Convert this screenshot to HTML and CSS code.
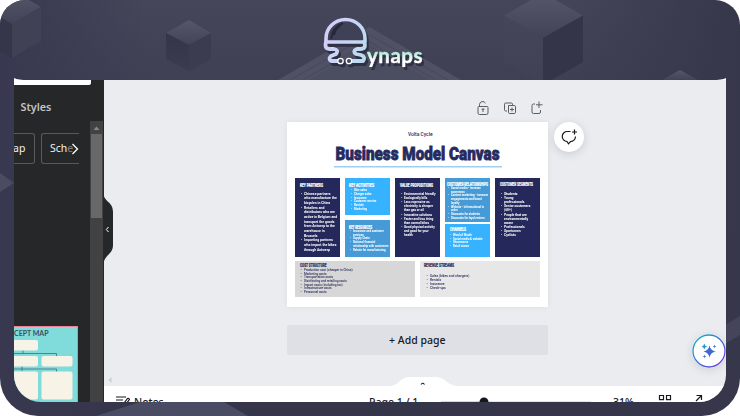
FILE: index.html
```html
<!DOCTYPE html>
<html lang="en">
<head>
<meta charset="utf-8">
<title>Synaps</title>
<link rel="stylesheet" href="styles.css">
</head>
<body>
<div class="frame">
  <svg class="backdrop" viewBox="0 0 740 416" aria-hidden="true">
    <defs>
      <linearGradient id="top" x1="0" y1="0" x2="0" y2="1"><stop offset="0" stop-color="#565769"/><stop offset="1" stop-color="#424357"/></linearGradient>
      <linearGradient id="side" x1="0" y1="0" x2="0" y2="1"><stop offset="0" stop-color="#343549"/><stop offset="1" stop-color="#3b3c50"/></linearGradient>
      <linearGradient id="lit" x1="0" y1="0" x2="0" y2="1"><stop offset="0" stop-color="#454659"/><stop offset="1" stop-color="#404155"/></linearGradient>
    </defs>
    <path fill="url(#top)" d="M12-10 41 7 12 24-17 7z"/><path fill="#35364a" d="M-17 7 12 24V58L-17 41z"/><path fill="#404154" d="M41 7 12 24V58L41 41z"/>
    <path fill="url(#top)" d="M189 20 211 33 189 45 166 33z"/><path fill="url(#side)" d="M166 33 189 45V71L166 59z"/><path fill="#3b3c50" d="M211 33 189 45V71L211 59z"/>
    <path fill="url(#top)" d="M543-7 583 15.500 543 38 504 15.500z"/><path fill="url(#lit)" d="M504 15.500 543 38V85L504 62z"/><path fill="#343549" d="M583 15.500 543 38V85L583 62z"/>
    <path fill="url(#top)" d="M680 70 698 80H662z"/>
    <path fill="#505164" d="M369.500 27 461 80H278z"/>
    <path fill="#4b4d60" d="M369.500 45 430 80H309z"/>
    <path fill="none" stroke="#494a5e" stroke-width="1.200" d="M290 80 369.500 35 448 80M303 80 369.500 42 436 80"/>
    <path fill="#4b4c61" d="M0 173 14 183 0 192z"/>
    <path fill="#50526a" d="M140 402H224L248 416H96z" opacity=".8"/>
    <path fill="#44455a" d="M725 325 740 316V335L725 344z"/>
  </svg>

  <header class="brand">
    <svg class="logo" viewBox="0 0 110 60" role="img" aria-label="Synaps">
      <defs>
        <linearGradient id="ink" gradientUnits="userSpaceOnUse" x1="4" y1="10" x2="101" y2="50"><stop offset="0" stop-color="#d5cdf9"/><stop offset=".4" stop-color="#c0d9f2"/><stop offset="1" stop-color="#8fe5bd"/></linearGradient>
        <linearGradient id="word" gradientUnits="userSpaceOnUse" x1="0" y1="35" x2="0" y2="52"><stop offset="0" stop-color="#a0e6d0"/><stop offset=".65" stop-color="#ffffff"/></linearGradient>
      </defs>
      <path class="dome" d="M5 27V23.500a19.500 19 0 0 1 39 0V27z"/>
      <path class="shine" d="M10 24Q11 13 22 8M13 20Q14 14 19 11"/>
      <path class="legs" d="M5 27Q3 34 9 34H13Q18 35 15 39L10 41Q7 44 10 46H17M43 27Q46 34 39 34H36Q31 36 35 39L40 40Q45 42 42 46H31"/>
      <circle class="node" cx="19.500" cy="46" r="2.700"/><circle class="node" cx="28" cy="46" r="2.700"/>
      <text class="wordmark" x="46" y="47.500" textLength="55.500" lengthAdjust="spacing">ynaps</text>
    </svg>
  </header>

  <div class="app">
    <aside class="sidebar">
      <div class="side-main">
        <div class="searchbox"></div>
        <div class="styles-tab">Styles</div>
        <div class="chips">
          <span class="chip chip-cut">ap</span>
          <span class="chip chip-fade">Sch<i>e</i></span>
          <svg class="chip-arrow" viewBox="0 0 8 12"><path d="M1.500 1 6.500 6 1.500 11"/></svg>
        </div>
        <div class="concept">
          <div class="concept-title">CEPT MAP</div>
          <svg viewBox="0 0 61 66" class="concept-map">
            <path class="wire" d="M0 13.500H42.500V16M9 10V13.500M0 29H42.500V32M8 26V31"/>
            <g class="box"><rect x="-6" y="0" width="30" height="10.500" rx="2"/><rect x="-6" y="16" width="30" height="10.500" rx="2"/><rect x="27.500" y="16" width="31" height="10.500" rx="2"/><rect x="-6" y="31.500" width="30" height="28" rx="2"/><rect x="27.500" y="31.500" width="31" height="28" rx="2"/></g>
          </svg>
        </div>
      </div>
      <div class="scroll">
        <svg class="scroll-up" viewBox="0 0 13 13"><path d="M3.500 9 6.500 5.500 9.500 9z"/></svg>
        <div class="thumb"></div>
      </div>
    </aside>

    <main class="work">
      <div class="tools">
        <svg viewBox="0 0 14 16"><path d="M3 6.500H11Q12 6.500 12 7.500V13Q12 14.500 10.500 14.500H3.500Q2 14.500 2 13V7.500Q2 6.500 3 6.500zM3.500 6.500V4.500A3.200 3.200 0 0 1 9.500 3.200M7 8.500V12M5.500 9.200H8.500"/></svg>
        <svg viewBox="0 0 14 16"><path d="M4 11H2.700Q1.500 11 1.500 9.800V4.200Q1.500 3 2.700 3H8.300Q9.500 3 9.500 4.200V5M5.500 5.500H11.300Q12.500 5.500 12.500 6.700V12.300Q12.500 13.500 11.300 13.500H6.700Q5.500 13.500 5.500 12.300zM9 7.500V11.500M7 9.500H11"/></svg>
        <svg viewBox="0 0 14 16"><path d="M5 4H3.500Q2 4 2 5.500V12Q2 13.500 3.500 13.500H9Q10.500 13.500 10.500 12V10M9 1.500V8M6 4.800H12.500"/></svg>
      </div>

      <section class="sheet">
        <svg class="sheet-head" viewBox="0 0 260 56">
          <text class="company" x="121" y="13.500" textLength="24.500" lengthAdjust="spacingAndGlyphs">Volta Cycle</text>
          <text class="title" x="48.500" y="38" textLength="164" lengthAdjust="spacingAndGlyphs">Business Model Canvas</text>
          <rect x="47" y="44" width="168" height="1.500" fill="#9fcfee"/>
        </svg>
        <div class="board">
          <div class="col"><div class="card navy">
            <svg class="cap"><text x="0" y="5.500" textLength="23" lengthAdjust="spacingAndGlyphs">KEY PARTNERS</text></svg>
            <ul class="partners"><li>Chinese partners<br>who manufacture the<br>bicycles in China</li><li>Retailers and<br>distributors who are<br>active in Belgium and<br>transport the goods<br>from Antwerp to the<br>warehouse in<br>Brussels</li><li>Importing partners<br>who import the bikes<br>through Antwerp</li></ul>
          </div></div>
          <div class="col">
            <div class="card sky activities-card">
              <svg class="cap"><text x="-1" y="5.500" textLength="25" lengthAdjust="spacingAndGlyphs">KEY ACTIVITIES</text></svg>
              <ul class="small activities"><li>Bike sales</li><li>Charger sales</li><li>Insurance</li><li>Customer service</li><li>Rentals</li><li>Marketing</li></ul>
            </div>
            <div class="card blue resources-card">
              <svg class="cap"><text x="-1" y="6" textLength="23" lengthAdjust="spacingAndGlyphs">KEY RESOURCES</text></svg>
              <ul class="small resources"><li>Insurance and customer<br>services</li><li>Supply Chain</li><li>National financial<br>relationship with customers</li><li>Rebate for manufacturing</li></ul>
            </div>
          </div>
          <div class="col"><div class="card navy">
            <svg class="cap"><text x="0" y="5.500" textLength="33" lengthAdjust="spacingAndGlyphs">VALUE PROPOSITIONS</text></svg>
            <ul class="medium"><li>Environmental friendly</li><li>Ecologically bills</li><li>Less expensive as<br>electricity is cheaper<br>than gas or oil</li><li>Innovative solutions</li><li>Faster and less tiring<br>than normal bikes</li><li>Good physical activity<br>and good for your<br>health</li></ul>
          </div></div>
          <div class="col close">
            <div class="card blue relations-card">
              <svg class="cap"><text x="-2" y="4.500" textLength="41" lengthAdjust="spacingAndGlyphs">CUSTOMER RELATIONSHIPS</text></svg>
              <ul class="small relations"><li>Social media - increase<br>awareness</li><li>Content marketing - increase<br>engagements and brand<br>loyalty</li><li>Website - informational in<br>order</li><li>Discounts for students</li><li>Discounts for loyal renters</li></ul>
            </div>
            <div class="card sky channels-card">
              <svg class="cap"><text x="0" y="5" textLength="16" lengthAdjust="spacingAndGlyphs">CHANNELS</text></svg>
              <ul class="small channels"><li>Word of Mouth</li><li>Social media &amp; website</li><li>Showrooms</li><li>Retail stores</li></ul>
            </div>
          </div>
          <div class="col"><div class="card navy">
            <svg class="cap"><text x="0" y="5" textLength="33" lengthAdjust="spacingAndGlyphs">CUSTOMER SEGMENTS</text></svg>
            <ul class="medium segments"><li>Students</li><li>Young<br>professionals</li><li>Senior customers<br>(60+)</li><li>People that are<br>environmentally<br>aware</li><li>Professionals</li><li>Sportsmen</li><li>Cyclists</li></ul>
          </div></div>
        </div>
        <div class="finance">
          <div class="card grey">
            <svg class="cap"><text x="0" y="5.500" textLength="26.500" lengthAdjust="spacingAndGlyphs">COST STRUCTURE</text></svg>
            <ul class="small costs"><li>Production cost (cheaper in China)</li><li>Marketing costs</li><li>Transportation costs</li><li>Distributing and retailing costs</li><li>Import costs (including tax)</li><li>Infrastructure costs</li><li>Personnel costs</li></ul>
          </div>
          <div class="card pale">
            <svg class="cap"><text x="-1" y="6" textLength="30" lengthAdjust="spacingAndGlyphs">REVENUE STREAMS</text></svg>
            <ul class="small revenue"><li>Sales (bikes and chargers)</li><li>Rentals</li><li>Insurance</li><li>Check-ups</li></ul>
          </div>
        </div>
      </section>

      <button class="add-page">+ Add page</button>

      <div class="lower">
        <svg class="scroll-left" viewBox="0 0 4 6"><path d="M3.500 0V6L.5 3z"/></svg>
        <svg class="bump" viewBox="0 0 70 10"><path fill="#fff" d="M0 10C11 10 10 1 21 1H46C58 1 57 10 70 10z"/><path class="caret" d="M32 8.500Q33.500 6 35.500 8.500"/></svg>
      </div>
      <footer class="status">
        <svg class="notes-icon" viewBox="0 0 16 12"><path d="M1 2H11M1 5H8M1 8H6M8 9.500 12.500 3.500Q14 3 14.500 4.500L10.500 9.500z"/></svg>
        <span class="notes">Notes</span>
        <span class="page-no">Page 1 / 1</span>
        <svg class="slider" viewBox="0 0 152 12"><path class="done" d="M1 7H43"/><path class="rest" d="M43 7H151"/><circle cx="44" cy="7" r="4.500"/></svg>
        <span class="zoom">31%</span>
        <svg class="grid" viewBox="0 0 14 14"><path d="M1.500 1.500H5.500V5.700H1.500zM8.500 1.500H12.500V5.700H8.500zM1.500 8.500H5.500V12H1.500zM8.500 8.500H12.500V12H8.500z"/></svg>
        <svg class="expand" viewBox="0 0 8 10"><path d="M1.500 1.500H6.500V6M6 2 1 7"/></svg>
      </footer>
    </main>

    <svg class="collapse" viewBox="0 0 11 74"><path fill="#252728" d="M0 0C1 11 10 9 10 20V53C10 63 1 62 0 74z"/><path class="tick" d="M5.500 35 3.300 37.500 5.500 40"/></svg>
    <button class="bubble comment" aria-label="Comment"><svg viewBox="0 0 18 18"><path d="M10.500 3.500H7.500A5 5 0 0 0 7 13.500L8.500 15.800 10.500 13.500A5.200 5.200 0 0 0 15.500 8.500M14.500 1.500V6.500M12 4H17"/></svg></button>
    <button class="bubble magic" aria-label="Magic"><svg viewBox="0 0 34 34"><defs><linearGradient id="m" x1="0" y1="0" x2="1" y2="1"><stop offset="0" stop-color="#16b5c4"/><stop offset=".5" stop-color="#3671d5"/><stop offset="1" stop-color="#7435df"/></linearGradient></defs><circle cx="17" cy="17" r="16" fill="#fff" stroke="url(#m)" stroke-width="1.300"/><path fill="#4068d3" d="M17.500 11.500Q18.500 16.500 23.500 17.500 18.500 18.500 17.500 23.500 16.500 18.500 11.500 17.500 16.500 16.500 17.500 11.500z"/><path fill="#2596c9" d="M12.300 9.500Q12.700 12.100 15.300 12.500 12.700 12.900 12.300 15.500 11.900 12.900 9.300 12.500 11.900 12.100 12.300 9.500z"/><path fill="#3f76d6" d="M22.500 10.500 23 12 24.500 12.500 23 13 22.500 14.500 22 13 20.500 12.500 22 12zM12.500 20.500 13 22 14.500 22.500 13 23 12.500 24.500 12 23 10.500 22.500 12 22z"/></svg></button>
  </div>
  <svg class="corner corner-left" viewBox="0 0 14 2"><path d="M0 0Q4 2 14 2H0z"/></svg>
  <svg class="corner corner-right" viewBox="0 0 14 2"><path d="M14 0Q10 2 0 2H14z"/></svg>
</div>
</body>
</html>
```
FILE: styles.css
```css
* { box-sizing: border-box; }
body { margin: 0; background: #fff; font-family: "Noto Sans", "Open Sans", sans-serif; }
button { border: 0; padding: 0; font: inherit; }
svg { display: block; flex: none; }
ul { list-style: none; margin: 0; padding: 0; }

.frame {
  position: relative;
  width: 740px;
  height: 416px;
  overflow: hidden;
  border-radius: 25px 25px 38px 38px;
  background: linear-gradient(90deg, #383950 0, transparent 20%, transparent 75%, #36374b 100%), linear-gradient(#454659 0, #3d3e52 25%, #343549 100%);
}
.backdrop { position: absolute; inset: 0; width: 740px; height: 416px; }
.brand { position: relative; height: 80px; padding: 15px 0 0 320.5px; }
.logo { width: 110px; height: 60px; overflow: visible; filter: drop-shadow(2.5px 3px 0 #2f3044); }
.dome { fill: #3f4156; stroke: url(#ink); stroke-width: 3.6; stroke-linejoin: round; }
.shine { fill: none; stroke: #262839; stroke-width: 2; }
.legs { fill: none; stroke: url(#ink); stroke-width: 3.8; stroke-linecap: round; stroke-linejoin: round; }
.node { fill: #44465b; stroke: #fff; stroke-width: 1.3; }
.wordmark { font: 700 20.5px "Lato", sans-serif; fill: url(#word); stroke: url(#word); stroke-width: .4; }

.app {
  position: relative;
  display: flex;
  width: 711.5px;
  height: 322px;
  margin-left: 14px;
  overflow: hidden;
  border-radius: 0 0 27px 27px;
  background: #ebecf0;
}
.sidebar { display: flex; width: 89.5px; flex: none; background: #252728; color: #fff; }
.side-main { width: 76px; display: flex; flex-direction: column; flex: none; }
.searchbox { width: 77px; height: 5px; background: #fff; border-radius: 0 0 2px 0; }
.styles-tab { margin: 13.5px 0 0 6.5px; font-size: 10.8px; line-height: 15px; font-weight: 600; color: #c2c3c4; }
.chips { display: flex; align-items: center; margin-top: 19.5px; height: 31px; }
.chip { display: block; height: 31px; line-height: 28px; font-size: 10.5px; border: 1px solid #58595b; color: #f2f2f2; }
.chip-cut { width: 21px; border-left: 0; border-radius: 0 3px 3px 0; text-indent: -1px; }
.chip-fade { width: 38px; margin-left: 6px; padding-left: 8px; border-right: 0; border-radius: 3px 0 0 3px; }
.chip-fade i { font-style: normal; color: #818284; }
.chip-arrow { width: 8px; height: 12px; margin-left: -8px; margin-right: auto; }
.chip-arrow path { fill: none; stroke: #fff; stroke-width: 1.3; }
.concept { width: 64px; height: 76px; margin-top: auto; overflow: hidden; background: #80dbdb; border: solid #ee809a; border-width: 1.5px 1.5px 0 0; }
.concept-title { height: 13px; font: 700 7px/12px Lato, sans-serif; color: #434c5a; white-space: nowrap; }
.concept-map { width: 61px; height: 66px; }
.wire { fill: none; stroke: #456e72; stroke-width: .8; }
.box { fill: #f8f3e7; }
.scroll { width: 13px; height: 281px; margin-top: 41px; background: #424242; }
.scroll-up { width: 13px; height: 13px; }
.scroll-up path { fill: #888; }
.thumb { width: 11px; height: 84px; margin: 0 auto; background: #686868; }

.work { flex: 1; display: flex; flex-direction: column; }
.tools { display: flex; gap: 13px; margin: 20px 0 0 372px; height: 22px; }
.tools svg { width: 14px; height: 16px; }
.tools path { fill: none; stroke: #5a5d65; stroke-width: 1; }
.sheet { width: 260.5px; height: 185px; margin-left: 183.5px; background: #fff; box-shadow: 0 0 6px #00000010; }
.sheet-head { width: 260px; height: 56px; }
.company { font: 500 6px Roboto, sans-serif; fill: #252a60; }
.title { font: 900 18.5px Roboto, sans-serif; fill: #252a60; stroke: #252a60; stroke-width: .8; }
.board { display: grid; grid-template-columns: repeat(5, 45px); gap: 5px; height: 78.5px; margin-left: 8px; }
.col { display: flex; flex-direction: column; gap: 4.5px; min-width: 0; }
.close { gap: 2px; }
.card { flex: 1; padding: 3px 0 0 5px; color: #fff; }
.activities-card { flex: 0 0 37px; }
.relations-card { flex: 0 0 44px; padding-left: 4px; }
.channels-card { padding-top: 1.5px; }
.navy { background: #24285b; }
.sky { background: #37b2ff; }
.blue { background: #469bd6; }
.cap { width: 39px; height: 8px; overflow: visible; }
.cap text { font: 900 4.6px Roboto, sans-serif; fill: currentColor; stroke: currentColor; stroke-width: .15; }
.card ul { width: 40px; margin: 2.7px 0 0 4px; font: 700 4px/4.67px Roboto, sans-serif; white-space: nowrap; transform: scaleX(.86); transform-origin: 0 0; }
.card li { position: relative; }
.card li::before { content: "•"; position: absolute; left: -3.6px; }
.card ul.medium { font-size: 3.9px; line-height: 4.17px; transform: scaleX(.8); }
.card ul.small { margin-top: 0; font-size: 3.3px; line-height: 3.73px; transform: scaleX(.86); }
.card ul.resources { margin-left: 2.5px; margin-top: -.5px; }
.card ul.relations { margin-left: 2px; margin-top: -2px; }
.card ul.channels { margin-left: 3px; margin-top: .4px; }
.card ul.activities { margin-top: .2px; }
.card ul.segments { transform: scaleX(.86); }
.finance { display: flex; gap: 5px; width: 245px; height: 36.5px; margin: 4px 0 0 8px; }
.finance .card { flex: 0 0 120px; color: #2a2d5a; padding-top: .3px; }
.grey { background: #d7d7d7; }
.pale { background: #e7e7e7; }
.card ul.costs, .card ul.revenue { font-weight: 500; transform: scaleX(.95); }
.card ul.revenue { font-size: 3.5px; line-height: 4px; margin: 5.2px 0 0 5px; }
.add-page { width: 260.5px; height: 30px; margin: 18px 0 0 183.5px; border-radius: 3px; background: #dfe0e5; color: #17191c; font-size: 10.5px; font-weight: 500; line-height: 30px; }
.lower { display: flex; align-items: flex-end; height: 10px; margin-top: auto; }
.scroll-left { width: 4px; height: 6px; margin: 0 0 3px 4.5px; }
.scroll-left path { fill: #cbccd0; }
.bump { width: 70px; height: 10px; margin-left: 277px; }
.caret { fill: none; stroke: #17191c; stroke-width: 1.1; }
.status { display: flex; height: 16px; overflow: hidden; background: #fff; color: #17191c; font-size: 10.5px; font-weight: 500; line-height: 32px; white-space: nowrap; }
.notes-icon { width: 16px; height: 12px; margin: 8.5px 0 0 11px; }
.notes-icon path { fill: none; stroke: #17191c; stroke-width: 1.2; }
.notes { width: 235px; margin-left: 3.5px; }
.page-no { width: 71px; }
.slider { width: 152px; height: 12px; margin-top: 8.5px; }
.slider path { stroke: #c6c9cf; stroke-width: 1.2; }
.slider .done { stroke: #a9adb5; }
.slider circle { fill: #12171d; }
.zoom { margin-left: 21px; width: 45px; }
.grid { width: 14px; height: 14px; margin-top: 8px; }
.grid path, .expand path { fill: none; stroke: #17191c; stroke-width: 1.2; }
.expand { width: 8px; height: 10px; margin: 8px 0 0 23px; }

.collapse { position: absolute; left: 89px; top: 112px; width: 11px; height: 74px; }
.tick { fill: none; stroke: #fff; stroke-width: 1; }
.bubble { position: absolute; border-radius: 50%; background: #fff; }
.comment { left: 540px; top: 42px; width: 30px; height: 30px; box-shadow: 0 2px 8px #40405030; }
.comment svg { width: 18px; height: 18px; margin: 0 auto; }
.comment path { fill: none; stroke: #17191c; stroke-width: 1.2; }
.magic { left: 678px; top: 254px; width: 34px; height: 34px; box-shadow: 0 2px 8px #40405028; }
.magic svg { width: 34px; height: 34px; }
.corner { position: absolute; top: 78px; width: 14px; height: 2px; fill: #fff; }
.corner-left { left: 14px; }
.corner-right { left: 711.5px; }
```
